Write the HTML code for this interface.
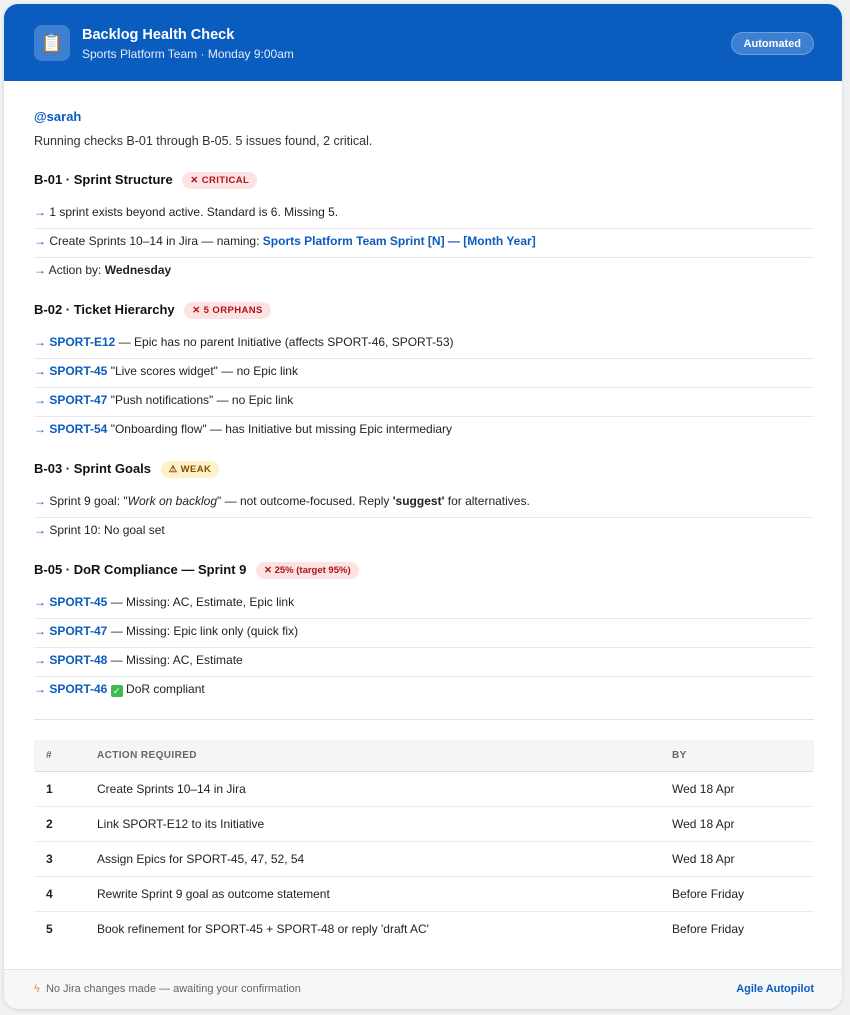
<!DOCTYPE html>
<html><head><meta charset="utf-8"><style>
*{box-sizing:border-box;margin:0;padding:0}
body{width:850px;height:1015px;background:#eef0f2;font-family:"Liberation Sans",sans-serif;color:#222;font-size:12px}
.card{position:absolute;left:4px;top:4px;width:838px;height:1005px;background:#fff;border-radius:14px;overflow:hidden;box-shadow:0 1px 3px rgba(0,0,0,.12)}
.hd{height:77px;background:#0b5cbf;position:relative;color:#fff}
.ic{position:absolute;left:30px;top:21px;width:36px;height:36px;border-radius:8px;background:#3d7fd0;display:flex;align-items:center;justify-content:center;font-size:18px}
.t1{position:absolute;left:78px;top:23px;font-size:14.5px;font-weight:bold}
.t2{position:absolute;left:78px;top:43px;font-size:12px;color:#e3ecf8}
.auto{position:absolute;right:28px;top:28px;height:23px;padding:0 12px;border-radius:12px;background:#3d7fd0;border:1px solid #6aa0e0;font-size:11px;font-weight:bold;line-height:22px}
.bd{position:absolute;left:30px;top:74px;width:780px}
.abs{position:absolute;left:0;white-space:nowrap}
.blue{color:#0b5cbf}
.h{font-weight:bold;font-size:13px;color:#111}
.pill{display:inline-block;font-size:9.5px;font-weight:bold;padding:0 8px;height:17px;line-height:17px;border-radius:9px;margin-left:6px;vertical-align:1px;letter-spacing:.4px}
.red{background:#fde2e4;color:#b0121b}
.yel{background:#fdf1c8;color:#8a4b00}
.sep{position:absolute;left:0;width:780px;height:1px;background:#e8e8e8}
table{position:absolute;left:30px;top:736px;width:780px;border-collapse:collapse;font-size:12px}
th{background:#f4f5f7;height:31px;text-align:left;font-size:10px;color:#666;font-weight:bold;letter-spacing:.4px;border-bottom:1px solid #ddd}
td{height:35px;border-bottom:1px solid #ececec}
tr:last-child td{border-bottom:none}
.ft{position:absolute;left:0;top:965px;width:838px;height:40px;background:#f6f7f8;border-top:1px solid #e3e3e3;font-size:11px;color:#666}
</style></head><body>
<div class="card">
<div class="hd"><div class="ic">📋</div><div class="t1">Backlog Health Check</div><div class="t2">Sports Platform Team · Monday 9:00am</div><div class="auto">Automated</div></div>
<div class="bd">
<div class="abs blue" style="top:31px;font-weight:bold;font-size:13px">@sarah</div>
<div class="abs" style="top:56px;font-size:12.5px;color:#333">Running checks B-01 through B-05. 5 issues found, 2 critical.</div>
<div class="abs h" style="top:94px">B-01 · Sprint Structure <span class="pill red">✕ CRITICAL</span></div>
<div class="abs" style="top:127px"><span class="blue">→</span> 1 sprint exists beyond active. Standard is 6. Missing 5.</div>
<div class="sep" style="top:150px"></div>
<div class="abs" style="top:156px"><span class="blue">→</span> Create Sprints 10–14 in Jira — naming: <b class="blue">Sports Platform Team Sprint [N] — [Month Year]</b></div>
<div class="sep" style="top:179px"></div>
<div class="abs" style="top:185px"><span class="blue">→</span> Action by: <b>Wednesday</b></div>
<div class="abs h" style="top:224px">B-02 · Ticket Hierarchy <span class="pill red">✕ 5 ORPHANS</span></div>
<div class="abs" style="top:257px"><b class="blue">→ SPORT-E12</b> — Epic has no parent Initiative (affects SPORT-46, SPORT-53)</div>
<div class="sep" style="top:280px"></div>
<div class="abs" style="top:286px"><b class="blue">→ SPORT-45</b> "Live scores widget" — no Epic link</div>
<div class="sep" style="top:309px"></div>
<div class="abs" style="top:315px"><b class="blue">→ SPORT-47</b> "Push notifications" — no Epic link</div>
<div class="sep" style="top:338px"></div>
<div class="abs" style="top:344px"><b class="blue">→ SPORT-54</b> "Onboarding flow" — has Initiative but missing Epic intermediary</div>
<div class="abs h" style="top:383px">B-03 · Sprint Goals <span class="pill yel">⚠ WEAK</span></div>
<div class="abs" style="top:416px"><span class="blue">→</span> Sprint 9 goal: "<i>Work on backlog</i>" — not outcome-focused. Reply <b>'suggest'</b> for alternatives.</div>
<div class="sep" style="top:439px"></div>
<div class="abs" style="top:445px"><span class="blue">→</span> Sprint 10: No goal set</div>
<div class="abs h" style="top:484px">B-05 · DoR Compliance — Sprint 9 <span class="pill red" style="letter-spacing:0">✕ 25% (target 95%)</span></div>
<div class="abs" style="top:517px"><b class="blue">→ SPORT-45</b> — Missing: AC, Estimate, Epic link</div>
<div class="sep" style="top:540px"></div>
<div class="abs" style="top:546px"><b class="blue">→ SPORT-47</b> — Missing: Epic link only (quick fix)</div>
<div class="sep" style="top:569px"></div>
<div class="abs" style="top:575px"><b class="blue">→ SPORT-48</b> — Missing: AC, Estimate</div>
<div class="sep" style="top:598px"></div>
<div class="abs" style="top:604px"><b class="blue">→ SPORT-46</b> <span style="display:inline-block;width:12px;height:12px;background:#3fb950;border-radius:2px;color:#fff;font-size:9px;text-align:center;line-height:12px;vertical-align:-1px">✓</span> DoR compliant</div>
<div class="sep" style="top:641px;background:#e3e3e3"></div>
</div>
<table>
<tr><th style="width:63px;padding-left:12px">#</th><th>ACTION REQUIRED</th><th style="width:142px">BY</th></tr>
<tr><td style="padding-left:12px;font-weight:bold">1</td><td>Create Sprints 10–14 in Jira</td><td>Wed 18 Apr</td></tr>
<tr><td style="padding-left:12px;font-weight:bold">2</td><td>Link SPORT-E12 to its Initiative</td><td>Wed 18 Apr</td></tr>
<tr><td style="padding-left:12px;font-weight:bold">3</td><td>Assign Epics for SPORT-45, 47, 52, 54</td><td>Wed 18 Apr</td></tr>
<tr><td style="padding-left:12px;font-weight:bold">4</td><td>Rewrite Sprint 9 goal as outcome statement</td><td>Before Friday</td></tr>
<tr><td style="padding-left:12px;font-weight:bold">5</td><td>Book refinement for SPORT-45 + SPORT-48 or reply 'draft AC'</td><td>Before Friday</td></tr>
</table>
<div class="ft"><span style="position:absolute;left:30px;top:13px"><span style="color:#f08a24">ϟ</span>&nbsp; No Jira changes made — awaiting your confirmation</span><span style="position:absolute;right:28px;top:13px;color:#0b5cbf;font-weight:bold">Agile Autopilot</span></div>
</div>
</body></html>
